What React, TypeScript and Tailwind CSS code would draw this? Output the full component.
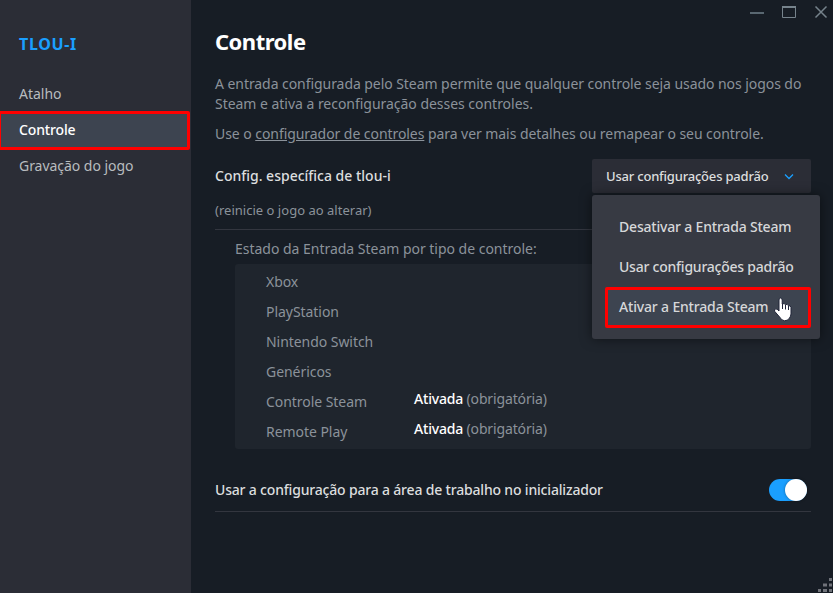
import type { ReactNode } from "react";

const controllers: { name: string; forced?: boolean }[] = [
  { name: "Xbox" },
  { name: "PlayStation" },
  { name: "Nintendo Switch" },
  { name: "Genéricos" },
  { name: "Controle Steam", forced: true },
  { name: "Remote Play", forced: true },
];

function Line({ children, className = "" }: { children: ReactNode; className?: string }) {
  return <div className={`whitespace-nowrap ${className}`}>{children}</div>;
}

function WindowButtons() {
  return (
    <svg className="absolute right-0 top-0" width="93" height="30" viewBox="0 0 93 30" fill="none">
      <path d="M10 13H24" stroke="#596771" strokeWidth="2" />
      <path d="M42.5 6V17.5H55.5V6" stroke="#76838c" />
      <path d="M42 7H56" stroke="#76838c" strokeWidth="2" />
      <path d="M75.5 6.5L86.5 17.5M86.5 6.5L75.5 17.5" stroke="#76838c" strokeWidth="1.5" />
    </svg>
  );
}

function ResizeGrip() {
  return (
    <svg className="absolute bottom-0 right-0" width="15" height="15" viewBox="0 0 15 15" fill="#70737a">
      <path d="M11 0h3v3h-3zM11 5.500h3v3h-3zM11 11h3v3h-3zM5 5.500h4v3H5zM5 11h4v3H5zM0 11h3v3H0z" />
    </svg>
  );
}

function HandCursor() {
  return (
    <svg className="absolute left-[182px] top-[102px]" width="20" height="25" viewBox="0 0 20 25">
      <path
        d="M5 3Q5 1 6.500 1T8.200 3V7Q10.500 5.800 11.300 7.600Q13.400 6.600 14.200 8.600Q16.600 8.200 17 10.500V17Q16.700 19.500 15.500 21Q14 23.800 10.500 23.800Q7.500 23.500 5.600 20L0.800 14.500Q0 12.700 1.200 12Q3 11.300 5 14Z"
        fill="white"
        stroke="#202438"
        strokeWidth="1"
      />
      <path d="M8.500 7V12M11.500 8V12.500M14.500 9V13" stroke="#202438" />
    </svg>
  );
}

function Menu() {
  return (
    <div className="absolute left-0 top-9 z-10 h-36 w-[228px] rounded-[3px] bg-[#373a43] pt-3 text-sm font-medium text-[#d6d7d9] shadow-[0_0_12px_rgba(0,0,0,0.5)]">
      <Line className="h-10 pl-[27px] leading-10 tracking-[-0.19px]">Desativar a Entrada Steam</Line>
      <Line className="h-10 pl-[27px] leading-10 tracking-[-0.23px]">Usar configurações padrão</Line>
      <Line className="ml-[13px] h-[41px] w-[206px] rounded-[2px] border-[3px] border-[#ff0000] bg-[#3d4450] pl-[11px] leading-[34px] tracking-[-0.17px]">
        Ativar a Entrada Steam
      </Line>
      <HandCursor />
    </div>
  );
}

export default function App() {
  return (
    <div className="relative flex h-[593px] w-[833px] overflow-hidden bg-[#171d25] font-['Noto_Sans',sans-serif] text-sm leading-5 text-[#8b929a]">
      <aside className="w-[191px] shrink-0 bg-[#2b2d36] pt-[33px] text-[#b8bcbf]">
        <Line className="h-[42px] pl-[19px] text-base font-bold leading-[22px] tracking-[0.65px] text-[#1a9fff]">TLOU-I</Line>
        <Line className="h-9 pl-[19px] leading-[37px]">Atalho</Line>
        <Line className="-ml-0.5 h-[39px] w-48 rounded-[2px] border-[3px] border-[#ff0000] bg-[#3d4450] pl-[18px] font-medium leading-[32px] tracking-[-0.15px] text-white">
          Controle
        </Line>
        <Line className="h-9 pl-[19px] leading-8 tracking-[-0.04px]">Gravação do jogo</Line>
      </aside>

      <main className="flex w-[620px] flex-col pl-6 pt-[27px]">
        <h1 className="h-[47px] text-[22px] font-bold leading-7 tracking-[-0.5px] text-white">Controle</h1>
        <Line className="tracking-[-0.06px]">A entrada configurada pelo Steam permite que qualquer controle seja usado nos jogos do</Line>
        <Line className="tracking-[-0.03px]">Steam e ativa a reconfiguração desses controles.</Line>
        <Line className="mt-2.5 tracking-[-0.06px]">
          Use o <span className="underline">configurador de controles</span> para ver mais detalhes ou remapear o seu controle.
        </Line>

        <div className="mt-[15px] flex h-[34px] items-center justify-between">
          <Line className="font-medium text-[#dcdedf]">Config. específica de tlou-i</Line>
          <div className="relative h-[34px] w-[219px] rounded-[2px] bg-[#2b2d36]">
            <div className="flex h-full items-center justify-between pl-3.5 pr-[17px]">
              <Line className="text-[13px] font-medium tracking-[-0.2px] text-[#dcdedf]">Usar configurações padrão</Line>
              <svg width="10" height="7" viewBox="0 0 10 7" fill="none">
                <path d="M1 1.500L5 5.500L9 1.500" stroke="#1a9fff" strokeWidth="1.300" />
              </svg>
            </div>
            <Menu />
          </div>
        </div>
        <Line className="mt-[7px] h-[30px] border-b border-[#33363f] text-[13px] tracking-[0.02px]">(reinicie o jogo ao alterar)</Line>

        <section className="pl-5 pt-[9px]">
          <Line className="h-[25px] tracking-[-0.02px]">Estado da Entrada Steam por tipo de controle:</Line>
          <div className="h-[185px] rounded-[3px] bg-[#1f252d] pl-[31px] pt-[3px]">
            {controllers.map((c) => (
              <div key={c.name} className="flex h-[30px]">
                <Line className="w-[148px] leading-[30px] tracking-[-0.05px]">{c.name}</Line>
                {c.forced && (
                  <Line className="leading-6 tracking-[-0.14px]">
                    <span className="font-medium tracking-[-0.2px] text-white">Ativada</span> (obrigatória)
                  </Line>
                )}
              </div>
            ))}
          </div>
        </section>

        <div className="mt-5 flex h-[43px] items-center justify-between border-b border-[#33363f] pr-1">
          <Line className="font-medium tracking-[-0.18px] text-[#dcdedf]">Usar a configuração para a área de trabalho no inicializador</Line>
          <div className="flex h-[22px] w-[38px] justify-end rounded-full bg-[#1a9fff]">
            <div className="size-[22px] rounded-full bg-white shadow-[0_0_3px_rgba(0,0,0,0.4)]" />
          </div>
        </div>
      </main>
      <WindowButtons />
      <ResizeGrip />
    </div>
  );
}
